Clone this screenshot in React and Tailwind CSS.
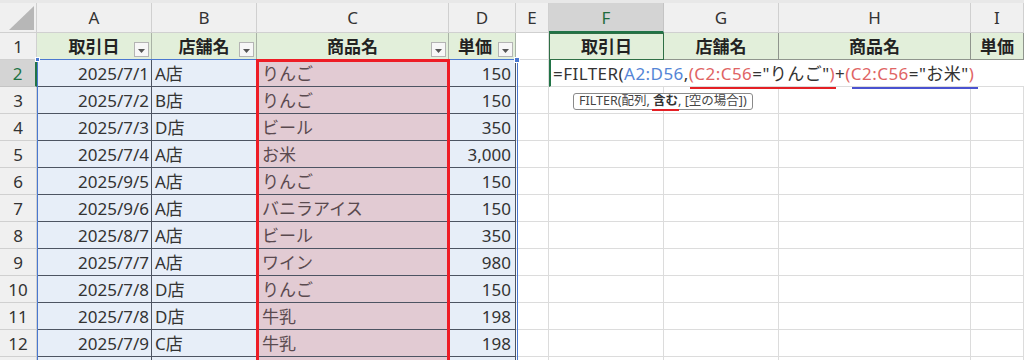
import React from "react";

const colLetters = ["A", "B", "C", "D", "E", "F", "G", "H", "I"];

const rows = [
  ["2025/7/1", "A店", "りんご", "150"],
  ["2025/7/2", "B店", "りんご", "150"],
  ["2025/7/3", "D店", "ビール", "350"],
  ["2025/7/4", "A店", "お米", "3,000"],
  ["2025/9/5", "A店", "りんご", "150"],
  ["2025/9/6", "A店", "バニラアイス", "150"],
  ["2025/8/7", "A店", "ビール", "350"],
  ["2025/7/7", "A店", "ワイン", "980"],
  ["2025/7/8", "D店", "りんご", "150"],
  ["2025/7/8", "D店", "牛乳", "198"],
  ["2025/7/9", "C店", "牛乳", "198"],
  ["", "", "", ""],
];

const FilterButton = () => (
  <span className="absolute right-[2px] bottom-[2px] w-[15px] h-[15px] bg-[#f7f7f7] border border-[#b4b4b4] flex items-end justify-center pb-[3px]">
    <svg width="7" height="4" viewBox="0 0 7 4">
      <path d="M0 0 L7 0 L3.5 4 Z" fill="#555" />
    </svg>
  </span>
);

const ColumnHeaders = () => (
  <>
    <div className="relative bg-[#f0f0f0] border-r border-b border-[#d0d0d0]">
      <svg className="absolute right-[2px] bottom-[2px]" width="25" height="24" viewBox="0 0 25 24">
        <path d="M25 0 L25 24 L0 24 Z" fill="#b7b7b7" />
      </svg>
    </div>
    {colLetters.map((c) =>
      c === "F" ? (
        <div
          key={c}
          className="flex items-center justify-center bg-[#d4d4d4] border-r border-[#c4c4c4] border-b-2 border-b-[#217346] text-[17px] text-[#1e6b3c]"
        >
          {c}
        </div>
      ) : (
        <div
          key={c}
          className="flex items-center justify-center bg-[#f0f0f0] border-r border-b border-[#d0d0d0] text-[17px] text-[#333]"
        >
          {c}
        </div>
      )
    )}
  </>
);

const HeaderRow = () => (
  <>
    <div className="flex items-center justify-center bg-[#f0f0f0] border-r border-b border-[#d0d0d0] text-[17px] text-[#333]">
      1
    </div>
    {["取引日", "店舗名", "商品名", "単価"].map((h) => (
      <div
        key={h}
        className="relative flex items-center justify-center bg-[#e2efda] border-r border-b border-[#a9b3a6] font-bold text-[17px] text-[#222]"
      >
        <span className={h === "単価" ? "pr-[14px]" : ""}>{h}</span>
        <FilterButton />
      </div>
    ))}
    <div className="bg-white border-r border-b border-[#dcdcdc]" />
    <div className="flex items-center justify-center bg-[#e2efda] border border-[#2f6f45] font-bold text-[17px] text-[#222]">
      取引日
    </div>
    {["店舗名", "商品名", "単価"].map((h) => (
      <div
        key={h}
        className="flex items-center justify-center bg-[#e2efda] border-r border-b border-[#8f958d] font-bold text-[17px] text-[#222]"
      >
        {h}
      </div>
    ))}
  </>
);

// formula being typed into F2, spills over G2:H2
const Formula = () => (
  <span className="whitespace-nowrap text-[17px] tracking-[0.45px] text-[#333]">
    =FILTER(<span className="text-[#5585d6]">A2:D56</span>,
    <span className="text-[#e06464]">(C2:C56</span>="りんご"
    <span className="text-[#e06464]">)</span>+
    <span className="text-[#e06464]">(C2:C56</span>="お米"
    <span className="text-[#e06464]">)</span>
  </span>
);

const DataRow = ({ r, i }) => {
  const n = i + 2;
  return (
    <>
      {n === 2 ? (
        <div className="flex items-center justify-center bg-[#d4d4d4] border-b border-[#c4c4c4] border-r-2 border-r-[#217346] text-[17px] text-[#217346]">
          {n}
        </div>
      ) : (
        <div className="flex items-center justify-center bg-[#f0f0f0] border-r border-b border-[#d0d0d0] text-[17px] text-[#333]">
          {n <= 12 ? n : ""}
        </div>
      )}
      <div className="flex items-center justify-end pr-[2px] bg-[#e7eef8] border-r border-b border-[#4d5462] text-[17px] text-[#333]">
        {r[0]}
      </div>
      <div className="flex items-center pl-[3px] bg-[#e7eef8] border-r border-b border-[#4d5462] text-[17px] text-[#333]">
        {r[1]}
      </div>
      <div className="flex items-center pl-[5px] bg-[#e2cbd3] border-r border-b border-[#4d5462] text-[17px] text-[#5a4a4f]">
        {r[2]}
      </div>
      <div className="flex items-center justify-end pr-[4px] bg-[#e7eef8] border-r border-b border-[#4d5462] text-[17px] text-[#333]">
        {r[3]}
      </div>
      <div className="bg-white border-r border-b border-[#dcdcdc]" />
      {n === 2 ? (
        <>
          <div className="relative z-10 flex items-center pl-[2px] bg-white border-b border-[#dcdcdc] border-l-2 border-l-[#217346]">
            <Formula />
          </div>
          <div className="bg-white border-b border-[#dcdcdc]" />
          <div className="bg-white border-b border-[#dcdcdc]" />
          <div className="bg-white border-b border-[#dcdcdc]" />
        </>
      ) : (
        <>
          <div className="bg-white border-r border-b border-[#dcdcdc]" />
          <div className="bg-white border-r border-b border-[#dcdcdc]" />
          <div className="bg-white border-r border-b border-[#dcdcdc]" />
          <div className="bg-white border-r border-b border-[#dcdcdc]" />
        </>
      )}
    </>
  );
};

export default function App() {
  return (
    <div className="relative w-[1024px] h-[360px] overflow-hidden bg-white font-['Noto_Sans','Noto_Sans_CJK_JP',sans-serif] leading-none">
      <div className="h-[3px] bg-[#e8e8e8]" />
      <div className="grid grid-cols-[37px_115px_105px_192px_67px_33px_115px_115px_192px_1fr] grid-rows-[30px_repeat(13,27px)]">
        <ColumnHeaders />
        <HeaderRow />
        {rows.map((r, i) => (
          <DataRow key={i} r={r} i={i} />
        ))}
      </div>

      {/* range highlights */}
      <div className="absolute left-[37px] top-[59px] w-[481px] h-[320px] border border-[#4a78d0] pointer-events-none" />
      <span className="absolute left-[35px] top-[57px] w-[5px] h-[5px] bg-[#4a78d0] border border-white" />
      <span className="absolute left-[514px] top-[57px] w-[6px] h-[6px] bg-[#4a78d0] border border-white" />
      <div className="absolute left-[256px] top-[59px] w-[194px] h-[320px] border-[3px] border-[#ee1c25] pointer-events-none" />

      {/* annotation underlines */}
      <div className="absolute z-20 left-[690px] top-[87px] w-[146px] h-[2px] bg-[#e42025]" />
      <div className="absolute z-20 left-[852px] top-[87px] w-[126px] h-[2px] bg-[#4a52d0]" />

      {/* function tooltip */}
      <div className="absolute z-20 left-[573px] top-[93px] h-[17px] px-[5px] flex items-center bg-white border border-[#8a8a8a] rounded-[3px] text-[12.5px] text-[#444] whitespace-nowrap">
        FILTER(配列,&nbsp;
        <span className="relative font-bold text-[#333]">
          含む
          <span className="absolute left-[-1px] right-[-1px] bottom-[-3px] h-[2px] bg-[#e42025]" />
        </span>
        , [空の場合])
      </div>
    </div>
  );
}
